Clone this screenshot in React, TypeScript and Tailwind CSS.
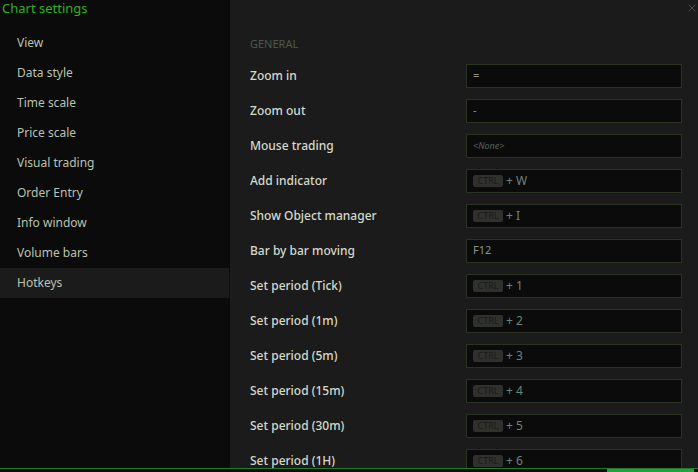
import { X } from 'lucide-react'

type Hotkey = { label: string; value?: string; ctrl?: string; none?: boolean }

const menu = ['View', 'Data style', 'Time scale', 'Price scale', 'Visual trading', 'Order Entry', 'Info window', 'Volume bars', 'Hotkeys']

const hotkeys: Hotkey[] = [
    { label: 'Zoom in', value: '=' },
    { label: 'Zoom out', value: '-' },
    { label: 'Mouse trading', none: true },
    { label: 'Add indicator', ctrl: 'W' },
    { label: 'Show Object manager', ctrl: 'I' },
    { label: 'Bar by bar moving', value: 'F12' },
    { label: 'Set period (Tick)', ctrl: '1' },
    { label: 'Set period (1m)', ctrl: '2' },
    { label: 'Set period (5m)', ctrl: '3' },
    { label: 'Set period (15m)', ctrl: '4' },
    { label: 'Set period (30m)', ctrl: '5' },
    { label: 'Set period (1H)', ctrl: '6' },
]

function HotkeyField({ item }: { item: Hotkey }) {
    return (
        <div className="w-[216px] h-[24px] shrink-0 flex items-center gap-[3px] pl-[6px] bg-[#0b0b0b] border border-[#2a3322]">
            {item.none && <span className="text-[9px] italic text-[#56625a]">&lt;None&gt;</span>}
            {item.value && <span className="text-[11px] text-[#8a948a]">{item.value}</span>}
            {item.ctrl && (
                <>
                    <span className="w-[30px] h-[12px] flex items-center justify-center rounded-[2px] bg-[#30312d] text-[9px] leading-none text-[#1a1a1a]">CTRL</span>
                    <span className="text-[12px] text-[#6c8479]">+ {item.ctrl}</span>
                </>
            )}
        </div>
    )
}

export default function App() {
    return (
        <div className="w-[698px] h-[472px] overflow-hidden flex flex-col bg-[#0d0d0d]" style={{ fontFamily: '"Noto Sans", "Open Sans", sans-serif' }}>
            <div className="h-[468px] flex shrink-0 overflow-hidden">
                {/* sidebar */}
                <aside className="w-[230px] shrink-0 bg-[#0b0b0b] pr-[1px]">
                    <div className="h-[28px] pl-[2px] text-[13px] leading-[16px] text-[#2fb021]">Chart settings</div>
                    {menu.map(m => (
                        <div
                            key={m}
                            className={`h-[30px] flex items-center pl-[17px] text-[12px] text-[#b9c2b0] ${m === 'Hotkeys' ? 'bg-[#1c1b1c]' : ''}`}
                        >
                            {m}
                        </div>
                    ))}
                </aside>

                {/* content */}
                <main className="relative flex-1 bg-[#1c1b1c] pl-[20px] pr-[16px] pt-[30px]">
                    <button className="absolute top-[2px] right-[0px] text-[#4d644f]">
                        <X size={12} strokeWidth={1.5} />
                    </button>
                    <div className="h-[28px] flex items-center text-[11px] text-[#4b5a49] uppercase">General</div>
                    {hotkeys.map(h => (
                        <div key={h.label} className="h-[35px] flex items-center justify-between">
                            <span className="text-[12px] font-medium text-[#d3dacb]">{h.label}</span>
                            <HotkeyField item={h} />
                        </div>
                    ))}
                </main>
            </div>

            {/* app behind the dialog */}
            <div className="h-[1px] shrink-0 bg-[#1f7a2c]" />
            <div className="flex-1 flex bg-[#0e0e0e]">
                <div className="ml-[607px] w-[87px] bg-[#1fa53a]" />
            </div>
        </div>
    )
}
